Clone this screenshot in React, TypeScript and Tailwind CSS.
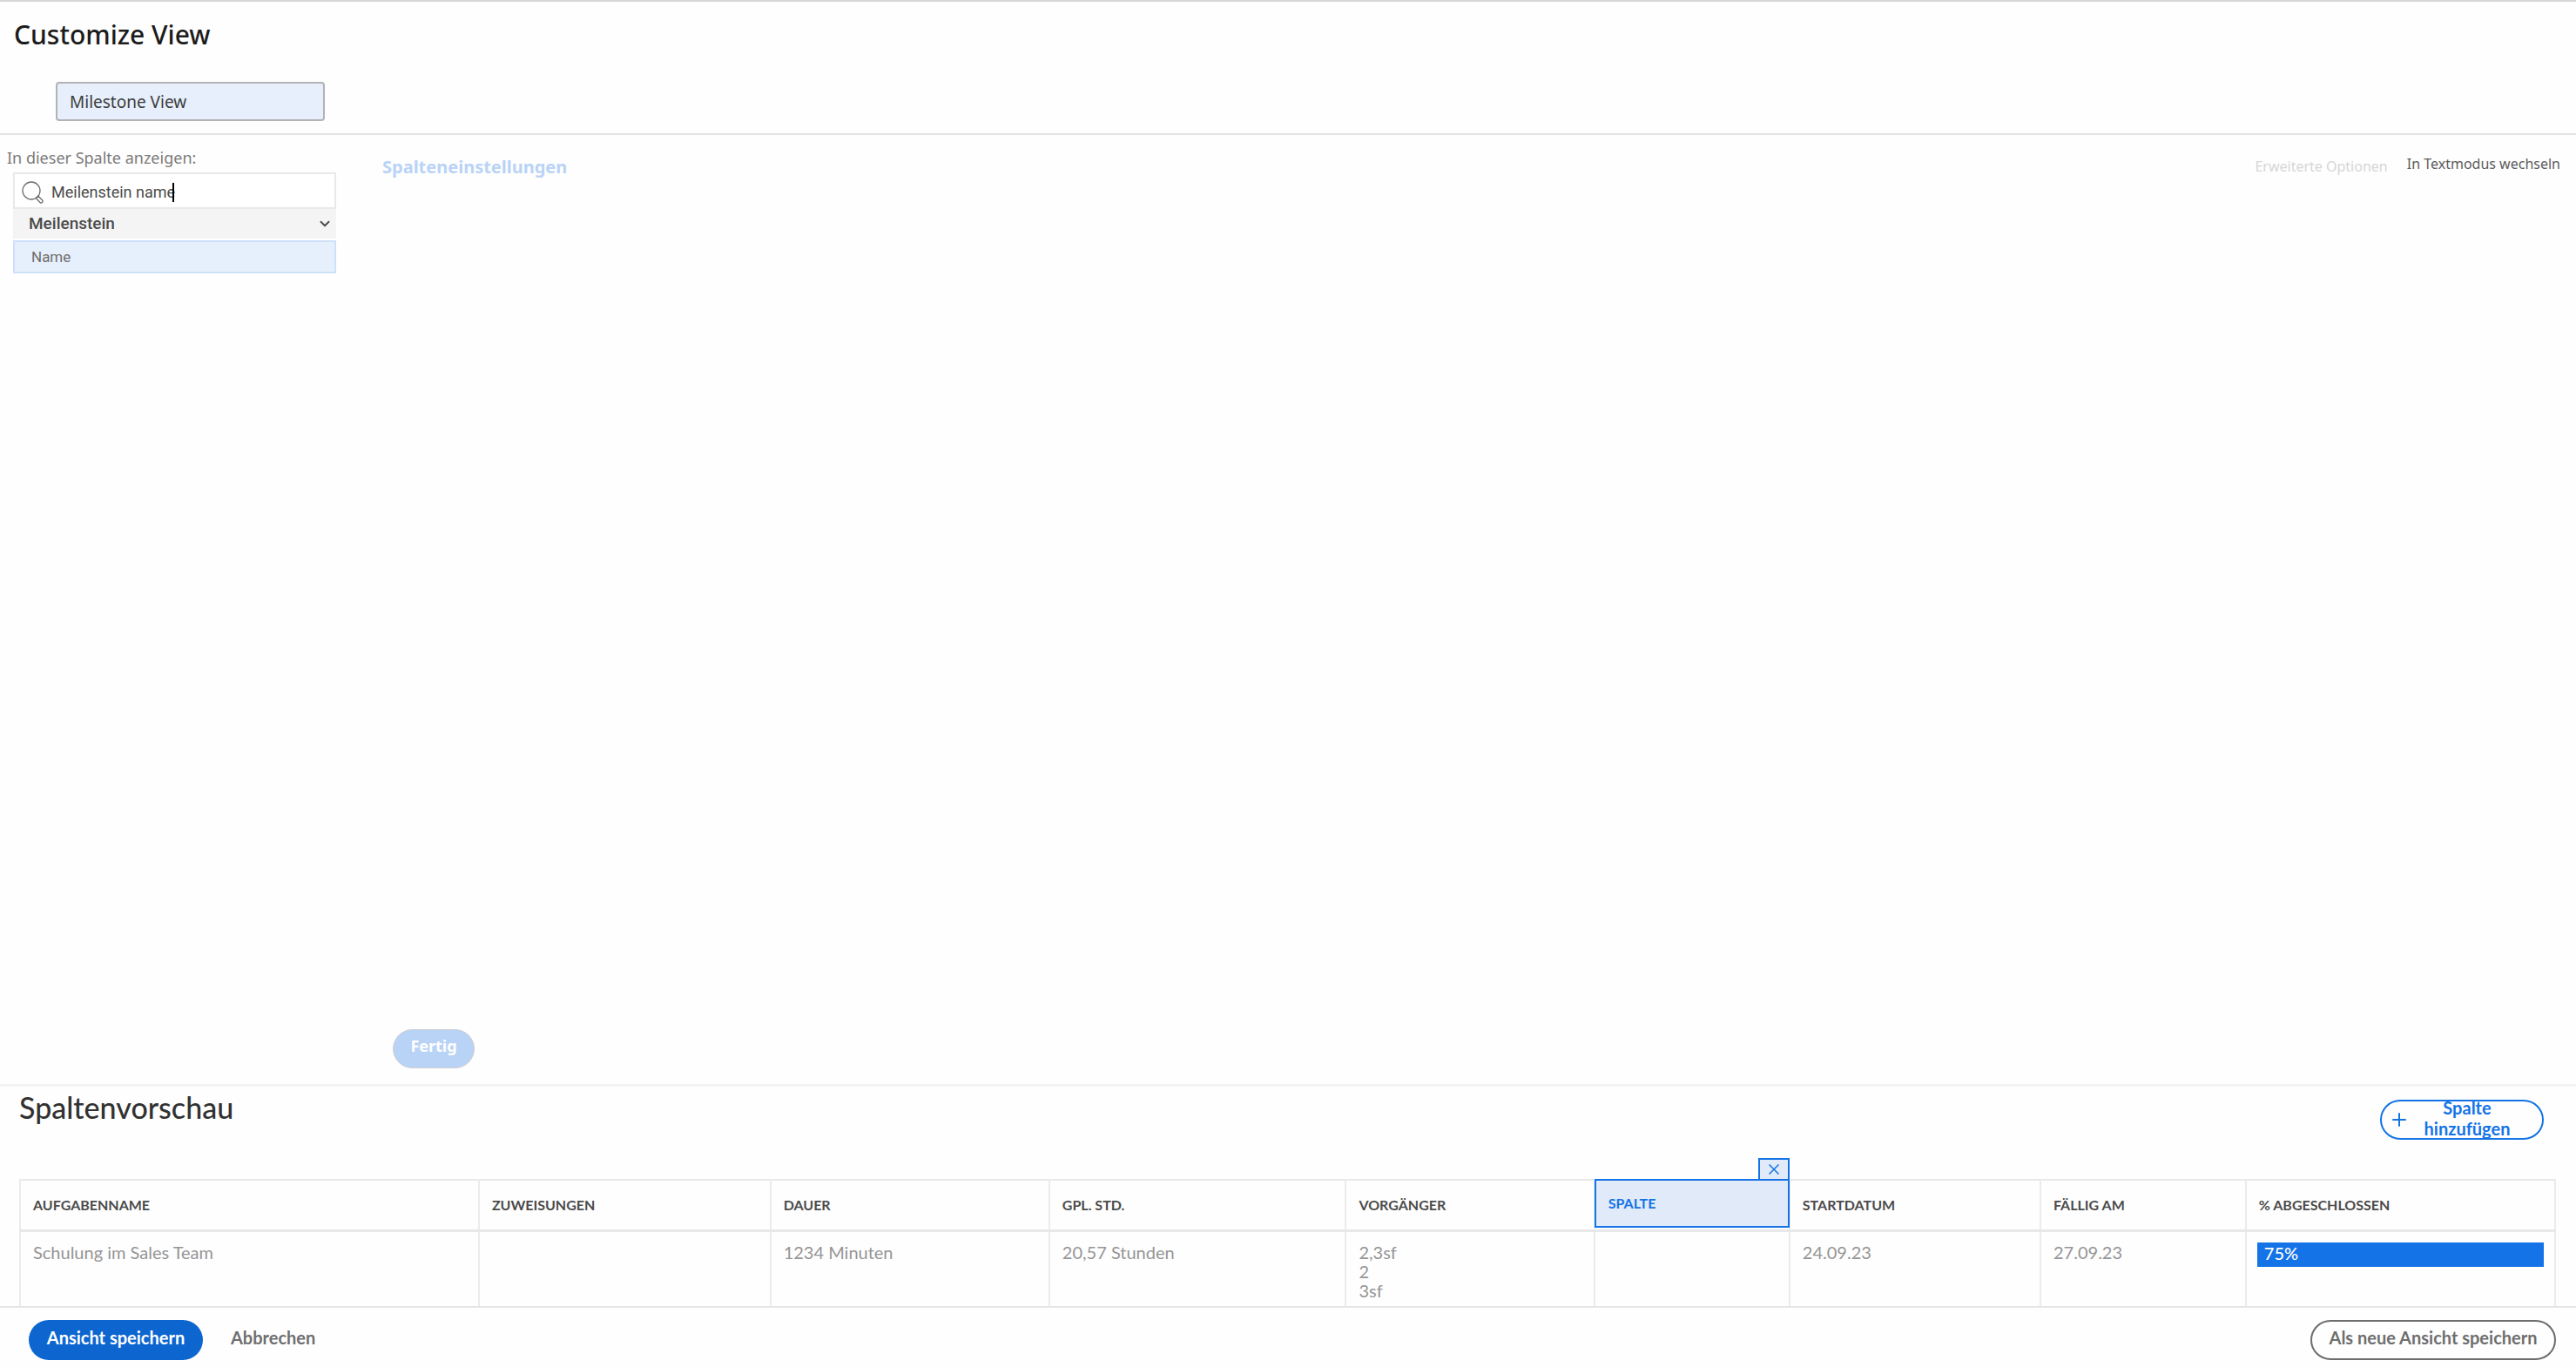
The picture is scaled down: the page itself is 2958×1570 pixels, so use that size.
import { Plus, ChevronDown } from "lucide-react";

type Column = { title: string; width: string; lines: string[]; selected?: boolean; progress?: boolean };

const columns: Column[] = [
  { title: "AUFGABENNAME", width: "w-[18.1%]", lines: ["Schulung im Sales Team"] },
  { title: "ZUWEISUNGEN", width: "w-[11.5%]", lines: [] },
  { title: "DAUER", width: "w-[11%]", lines: ["1234 Minuten"] },
  { title: "GPL. STD.", width: "w-[11.7%]", lines: ["20,57 Stunden"] },
  { title: "VORGÄNGER", width: "w-[9.8%]", lines: ["2,3sf", "2", "3sf"] },
  { title: "SPALTE", width: "w-[7.7%]", lines: [], selected: true },
  { title: "STARTDATUM", width: "w-[9.9%]", lines: ["24.09.23"] },
  { title: "FÄLLIG AM", width: "w-[8.1%]", lines: ["27.09.23"] },
  { title: "% ABGESCHLOSSEN", width: "w-[12.2%]", lines: ["75%"], progress: true },
];

function Header() {
  return (
    <header className="border-t-2 border-b-2 border-t-[#d6d6d6] border-b-[#e3e3e3] pb-[14px]">
      <h1 className="pt-[18px] pl-4 text-[30px] leading-[40px] font-medium text-[#1c1c1c]">Customize View</h1>
      <input
        aria-label="Name der Ansicht"
        defaultValue="Milestone View"
        className="mt-[34px] ml-16 block h-[45px] w-[309px] rounded-[4px] border-2 border-[#b1b3b6] bg-[#e7effc] px-3.5 text-[19px] text-[#3c3c3c] outline-none"
      />
    </header>
  );
}

function FieldPicker() {
  return (
    <aside className="w-[423px] shrink-0 pt-3 font-['Roboto',sans-serif]">
      <label
        htmlFor="field-search"
        className="block pl-2 font-['Noto_Sans',sans-serif] text-[18px] leading-[28px] text-[#7a7a7a]"
      >
        In dieser Spalte anzeigen:
      </label>
      <div className="mt-[3px] ml-[15px] w-[371px]">
        <div className="flex h-[42px] items-center border-2 border-[#e9e9e9] bg-white pt-1 pl-2">
          <svg viewBox="0 0 26 26" className="size-[26px] shrink-0" fill="none" stroke="#6e6e6e" strokeWidth="1.3">
            <circle cx="11" cy="11" r="10" />
            <path d="M16.300 19.500l4.400 4.700c.8.900 2 .9 2.800.2s.8-1.900 0-2.700l-4.600-4.500z" />
          </svg>
          <div className="relative ml-2 flex-1">
            <input
              id="field-search"
              defaultValue="Meilenstein name"
              className="block w-full bg-transparent text-[18px] leading-[28px] text-[#4b4b4b] outline-none"
            />
            <span className="absolute top-[3px] left-[139px] h-[22px] w-0.5 bg-black" />
          </div>
        </div>
        <button className="flex h-[34px] w-full items-center justify-between bg-[#f4f4f4] pr-1 pl-[18px] text-[19px] font-medium text-[#4b4b4b]">
          Meilenstein
          <ChevronDown className="size-[18px]" strokeWidth={2.5} />
        </button>
        <button className="mt-0.5 block h-[38px] w-full border-2 border-[#cfe1f8] bg-[#e6effc] pt-0.5 pl-[19px] text-left text-[17px] text-[#6e6e6e]">
          Name
        </button>
      </div>
    </aside>
  );
}

function Editor() {
  return (
    <main className="flex flex-1 border-b-[3px] border-[#f3f3f3]">
      <FieldPicker />
      <section className="flex flex-1 flex-col justify-between pt-[22px] pb-[18px] pl-4">
        <div className="flex items-start justify-between pr-[18px]">
          <h2 className="text-[20px] leading-[30px] font-bold text-[#b9d3f7]">Spalteneinstellungen</h2>
          <div className="flex items-start gap-[22px] text-[16px] leading-[22px]">
            <button disabled className="pt-[3px] text-[#d6d6d6]">Erweiterte Optionen</button>
            <button className="text-[#5c5c5c]">In Textmodus wechseln</button>
          </div>
        </div>
        <button
          disabled
          className="ml-3 h-[45px] w-[94px] rounded-full border border-[#cfcfcf] bg-[#b8d3f6] pb-1.5 text-[18px] font-bold text-white"
        >
          Fertig
        </button>
      </section>
    </main>
  );
}

function HeaderCell({ column }: { column: Column }) {
  if (column.selected) {
    return (
      <th className="relative border-x-2 border-[#ebebeb] p-0">
        <div className="absolute -inset-x-px -top-0.5 bottom-0.5 flex items-center border-2 border-[#1473e6] bg-[#e0eaf8] pl-3.5 text-[#1473e6]">
          {column.title}
        </div>
        <button
          aria-label="Spalte entfernen"
          className="absolute -top-[26px] -right-px flex h-[26px] w-[36px] items-center justify-center border-2 border-[#1473e6] bg-[#e0eaf8]"
        >
          <svg viewBox="0 0 12 12" className="size-3" stroke="#1473e6" strokeWidth="1.500">
            <path d="M0.500 0.500l11 11M11.500 0.500l-11 11" />
          </svg>
        </button>
      </th>
    );
  }
  return <th className="border-x-2 border-[#ebebeb] px-3.5">{column.title}</th>;
}

function Preview() {
  return (
    <section className="pr-[23px] pl-[22px] font-['Lato',sans-serif]">
      <div className="flex h-[106px] items-start justify-between">
        <h2 className="pt-1.5 text-[34px] leading-[36px] font-medium text-[#323232]">Spaltenvorschau</h2>
        <button className="mt-[15px] mr-3.5 flex h-[46px] w-[188px] items-center rounded-full border-2 border-[#1473e6] pr-5 pb-1 pl-2 text-[#1473e6]">
          <Plus className="mt-1 size-6 shrink-0" strokeWidth={2} />
          <span className="flex-1 text-center text-[20px] leading-[24px] font-bold">
            Spalte
            <br />
            hinzufügen
          </span>
        </button>
      </div>
      <table className="w-full table-fixed border-collapse text-left align-top">
        <colgroup>
          {columns.map((c) => (
            <col key={c.title} className={c.width} />
          ))}
        </colgroup>
        <thead>
          <tr className="h-[58px] border-t-2 border-b-[3px] border-[#e8e8e8] text-[16px] font-bold text-[#4b4b4b]">
            {columns.map((c) => (
              <HeaderCell key={c.title} column={c} />
            ))}
          </tr>
        </thead>
        <tbody>
          <tr className="text-[20px] leading-[22px] text-[#959595]">
            {columns.map((c) => (
              <td key={c.title} className="h-[87px] border-x-2 border-[#ebebeb] px-3.5 pt-3 align-top">
                {c.progress ? (
                  <div className="-mx-0.5 flex h-[28px] items-center bg-[#1473e6] px-2 pb-1 font-medium text-white">
                    75%
                  </div>
                ) : (
                  c.lines.map((line) => <div key={line}>{line}</div>)
                )}
              </td>
            ))}
          </tr>
        </tbody>
      </table>
    </section>
  );
}

function Footer() {
  return (
    <footer className="flex items-start border-t-2 border-[#e6e6e6] pt-3.5 pr-[23px] pb-2 pl-[33px] font-['Lato',sans-serif] text-[20px] font-bold">
      <button className="h-[46px] w-[200px] rounded-full bg-[#0d66d0] pb-1.5 text-white">Ansicht speichern</button>
      <button className="ml-8 h-[46px] pb-1.5 text-[#6e6e6e]">Abbrechen</button>
      <button className="ml-auto h-[46px] w-[282px] rounded-full border-2 border-[#6e6e6e] pb-1.5 text-[#6e6e6e]">
        Als neue Ansicht speichern
      </button>
    </footer>
  );
}

export default function App() {
  return (
    <div className="flex min-h-screen flex-col bg-[#fefefe] font-['Noto_Sans',sans-serif]">
      <Header />
      <Editor />
      <Preview />
      <Footer />
    </div>
  );
}
